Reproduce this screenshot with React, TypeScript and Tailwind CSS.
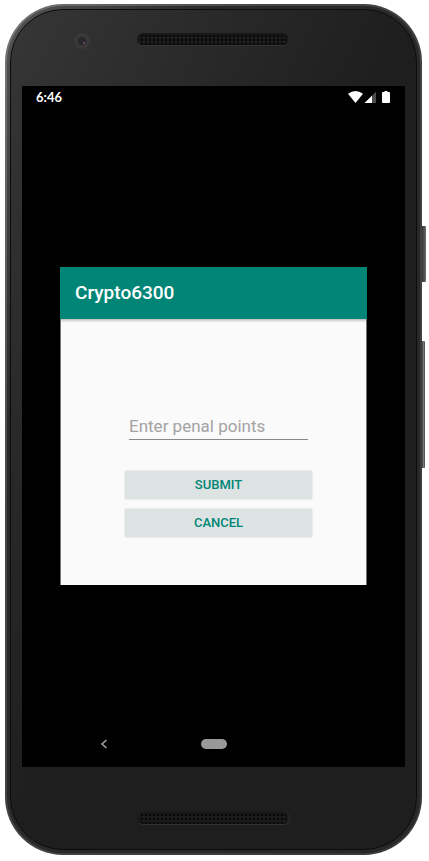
import { useId } from "react";

function SpeakerGrille() {
  const id = useId();
  return (
    <div className="h-[13px] w-[153px] overflow-hidden rounded-full border-r border-b border-[#333] bg-[#181818]">
      <svg className="block h-full w-full" aria-hidden="true">
        <defs>
          <pattern id={id} x="3" y="1" width="4" height="4" patternUnits="userSpaceOnUse">
            <rect width="2" height="2" x="1" y="1" fill="#080808" />
            <rect width="1" height="1" x="3" y="3" fill="#242424" />
          </pattern>
        </defs>
        <rect x="3" y="1" width="146" height="11" fill={`url(#${id})`} />
      </svg>
    </div>
  );
}

function StatusBar() {
  return (
    <header className="flex h-[22px] items-center justify-between pr-3.5 pl-3.5 text-white">
      <time className="font-['Lato','Open_Sans',sans-serif] text-[13px] leading-4 font-bold">6:46</time>
      <svg width="43" height="12" viewBox="0 0 43 12" role="img" aria-label="Wi-Fi, signal and battery">
        <path d="M0 2.8Q7.500 -2.800 15 2.800L7.500 12Z" fill="#fff" />
        <path d="M28 0.800V12H16.500Z" fill="#4c4c4c" />
        <path d="M24 4.700V12H16.500Z" fill="#fff" />
        <path d="M36.500 0h3v1h1.700a.8.8 0 0 1 .8.8v9.400a.8.8 0 0 1-.8.8h-6.400a.8.8 0 0 1-.8-.8v-9.400a.8.8 0 0 1 .8-.8h1.700z" fill="#fff" />
      </svg>
    </header>
  );
}

function PointsDialog() {
  const button =
    "h-7 w-full rounded-[1px] bg-[#dde3e2] text-[13px] leading-4 font-medium text-[#008577] uppercase shadow-[0_0_2px_rgba(0,0,0,0.2)]";
  return (
    <section className="w-full border-r border-l border-[#767676] bg-[#fafafa]" aria-labelledby="dialog-title">
      <div className="-mx-px flex h-[52px] items-center bg-[#008577] px-[15px] shadow-[0_1px_3px_rgba(0,0,0,0.35)]">
        <h1 id="dialog-title" className="text-[19px] leading-6 font-medium text-white">
          Crypto6300
        </h1>
      </div>
      <form className="flex flex-col pt-[94px] pr-[54px] pb-12 pl-16" onSubmit={(e) => e.preventDefault()}>
        <div className="px-1">
          <input
            type="text"
            aria-label="Enter penal points"
            placeholder="Enter penal points"
            className="block h-[27px] w-full border-b border-[#888] bg-transparent text-[17px] leading-6 text-[#333] outline-none placeholder:text-[#a3a3a3]"
          />
        </div>
        <div className="flex flex-col gap-2.5 pt-[31px]">
          <button type="submit" className={button}>Submit</button>
          <button type="button" className={button}>Cancel</button>
        </div>
      </form>
    </section>
  );
}

function NavigationBar() {
  return (
    <nav className="grid h-[46px] grid-cols-[1fr_auto_1fr] items-center">
      <button type="button" aria-label="Back" className="ml-[78px] w-2">
        <svg width="8" height="10" viewBox="0 0 8 10" fill="none" stroke="#a3a3a3" strokeWidth="1.600">
          <path d="M6.500 1L2 5L6.500 9" />
        </svg>
      </button>
      <button type="button" aria-label="Home" className="h-2.5 w-[26px] rounded-full bg-[#999]" />
    </nav>
  );
}

export default function App() {
  return (
    <div className="min-h-screen bg-white pt-1 pr-[7px] pb-1.5 pl-[5px] font-['Roboto','Liberation_Sans',sans-serif]">
      <div className="relative">
        <span className="absolute top-[222px] -right-1 h-14 w-1 rounded-r-[1px] bg-linear-to-r from-[#383637] to-[#6b696a]" />
        <span className="absolute top-[337px] -right-[3px] h-[127px] w-[3px] rounded-r-[1px] bg-linear-to-r from-[#3a3a3a] via-[#777] to-[#444]" />
        <div className="rounded-[58px] bg-linear-to-br from-[#777] via-[#484647] via-30% to-[#383637] p-0.5">
          <div className="rounded-[56px] bg-linear-to-br from-[#555] via-[#2a2a2a] via-25% to-[#272727] p-[3px]">
            <div className="rounded-[53px] border border-[#0c0c0c] bg-linear-to-br from-[#363637] via-[#1e1e1e] via-50% to-[#1e1e1e] px-[11px]">
              <div className="grid h-[76px] grid-cols-[1fr_auto_1fr] items-start pt-[23px]">
                <span className="ml-[52px] flex size-4 items-center justify-center rounded-full bg-[#39393a]">
                  <span className="flex size-2 items-center justify-center rounded-full bg-[#29272d]">
                    <span className="mt-1 ml-1 size-0.5 rounded-full bg-[#78505b]" />
                  </span>
                </span>
                <SpeakerGrille />
              </div>
              <main className="flex flex-col bg-black">
                <StatusBar />
                <div className="flex min-h-[613px] flex-1 items-center px-[38px] pt-[22px]">
                  <PointsDialog />
                </div>
                <NavigationBar />
              </main>
              <div className="flex h-[82px] items-end justify-center pb-6">
                <SpeakerGrille />
              </div>
            </div>
          </div>
        </div>
      </div>
    </div>
  );
}
